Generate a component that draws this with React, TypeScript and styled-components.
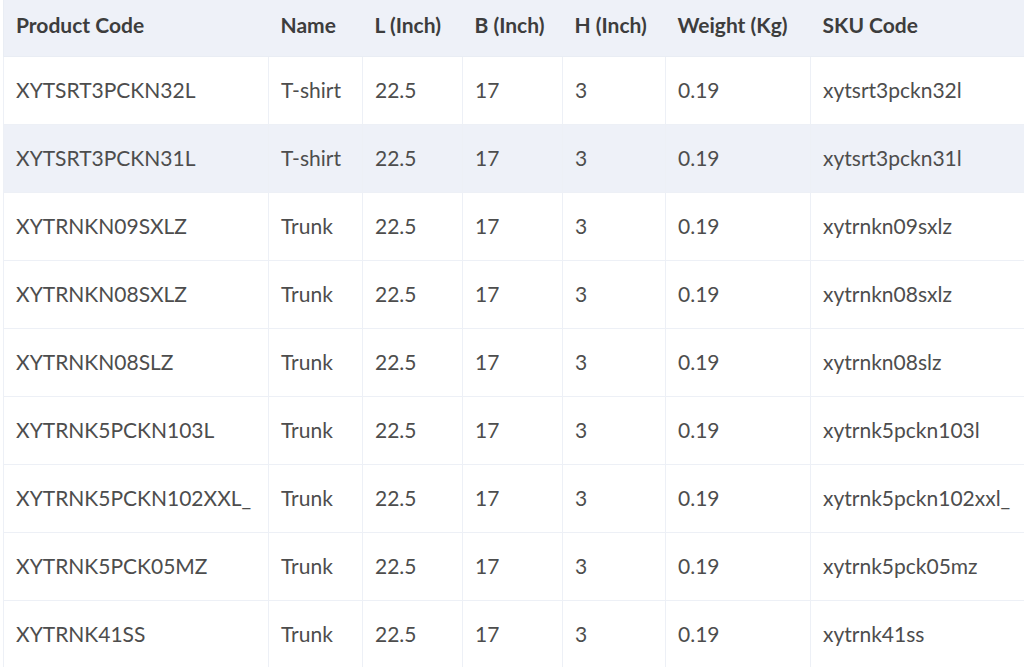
import React from "react";
import styled, { createGlobalStyle } from "styled-components";

const Global = createGlobalStyle`
  html, body { margin: 0; padding: 0; background: #ffffff; overflow: hidden; }
  body { font-family: "Lato", "Open Sans", sans-serif; }
`;

const Wrap = styled.div`
  width: 1024px;
  height: 667px;
  overflow: hidden;
  padding-left: 3px;
  box-sizing: border-box;
`;

const Table = styled.table`
  border-collapse: collapse;
  table-layout: fixed;
  width: 1060px;
  border-left: 1px solid #e9edf4;
`;

const HeadCell = styled.th`
  height: 56px;
  padding: 0 0 6px 12px;
  box-sizing: border-box;
  text-align: left;
  font-size: 21px;
  font-weight: 700;
  color: #3d3d3d;
  background: #eef1f8;
  white-space: nowrap;
  border-bottom: 1px solid #e9edf4;
`;

const Row = styled.tr<{ $striped: boolean }>`
  background: ${(p) => (p.$striped ? "#eef1f8" : "#ffffff")};
`;

const Cell = styled.td`
  height: 68px;
  padding: 0 0 2px 12px;
  box-sizing: border-box;
  font-size: 21px;
  color: #4d4d4d;
  white-space: nowrap;
  overflow: hidden;
  border: 1.5px solid #edf0f6;
  border-top: none;
`;

const widths = [265, 94, 100, 100, 103, 145, 253];
const headers = ["Product Code", "Name", "L (Inch)", "B (Inch)", "H (Inch)", "Weight (Kg)", "SKU Code"];

const rows: [string, string, string][] = [
  ["XYTSRT3PCKN32L", "T-shirt", "xytsrt3pckn32l"],
  ["XYTSRT3PCKN31L", "T-shirt", "xytsrt3pckn31l"],
  ["XYTRNKN09SXLZ", "Trunk", "xytrnkn09sxlz"],
  ["XYTRNKN08SXLZ", "Trunk", "xytrnkn08sxlz"],
  ["XYTRNKN08SLZ", "Trunk", "xytrnkn08slz"],
  ["XYTRNK5PCKN103L", "Trunk", "xytrnk5pckn103l"],
  ["XYTRNK5PCKN102XXL_", "Trunk", "xytrnk5pckn102xxl_"],
  ["XYTRNK5PCK05MZ", "Trunk", "xytrnk5pck05mz"],
  ["XYTRNK41SS", "Trunk", "xytrnk41ss"],
];

export default function App() {
  return (
    <>
      <Global />
      <Wrap>
        <Table>
          <colgroup>
            {widths.map((w, i) => (
              <col key={i} style={{ width: w }} />
            ))}
          </colgroup>
          <thead>
            <tr>
              {headers.map((h) => (
                <HeadCell key={h}>{h}</HeadCell>
              ))}
            </tr>
          </thead>
          <tbody>
            {rows.map((r, i) => (
              <Row key={r[0]} $striped={i === 1}>
                <Cell>{r[0]}</Cell>
                <Cell>{r[1]}</Cell>
                <Cell>22.5</Cell>
                <Cell>17</Cell>
                <Cell>3</Cell>
                <Cell>0.19</Cell>
                <Cell>{r[2]}</Cell>
              </Row>
            ))}
          </tbody>
        </Table>
      </Wrap>
    </>
  );
}
